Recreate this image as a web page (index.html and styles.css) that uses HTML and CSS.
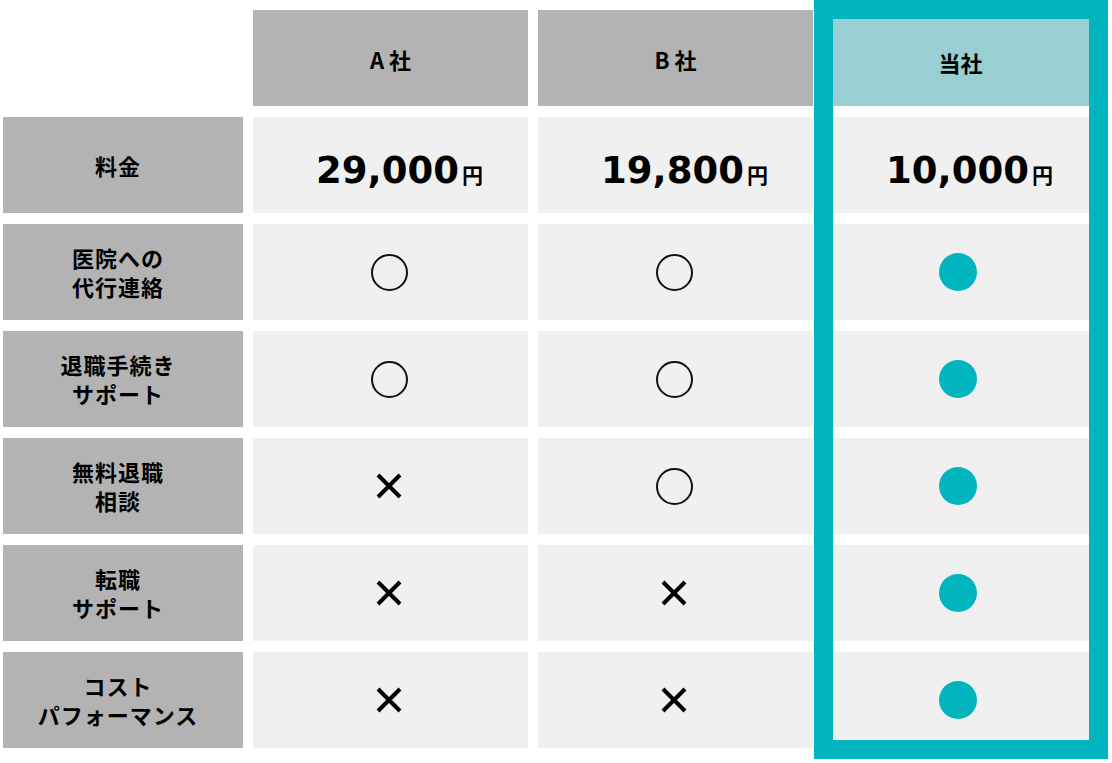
FILE: index.html
```html
<!DOCTYPE html>
<html lang="ja">
<head>
<meta charset="utf-8">
<title>比較表</title>
<link rel="stylesheet" href="styles.css">
</head>
<body>
<div class="table">
  <div class="blank"></div>
  <div class="cell head">A 社</div>
  <div class="cell head">B 社</div>
  <div class="cell head ours">当社</div>

  <div class="cell label">料金</div>
  <div class="cell val price"><span class="num">29,000</span><span class="yen">円</span></div>
  <div class="cell val price"><span class="num">19,800</span><span class="yen">円</span></div>
  <div class="cell val price"><span class="num">10,000</span><span class="yen">円</span></div>

  <div class="cell label">医院への<br>代行連絡</div>
  <div class="cell val"><span class="ring"></span></div>
  <div class="cell val"><span class="ring"></span></div>
  <div class="cell val"><span class="dot"></span></div>

  <div class="cell label">退職手続き<br>サポート</div>
  <div class="cell val"><span class="ring"></span></div>
  <div class="cell val"><span class="ring"></span></div>
  <div class="cell val"><span class="dot"></span></div>

  <div class="cell label">無料退職<br>相談</div>
  <div class="cell val"><svg class="cross" viewBox="0 0 26 26"><path d="M2 2L24 24M24 2L2 24"/></svg></div>
  <div class="cell val"><span class="ring"></span></div>
  <div class="cell val"><span class="dot"></span></div>

  <div class="cell label">転職<br>サポート</div>
  <div class="cell val"><svg class="cross" viewBox="0 0 26 26"><path d="M2 2L24 24M24 2L2 24"/></svg></div>
  <div class="cell val"><svg class="cross" viewBox="0 0 26 26"><path d="M2 2L24 24M24 2L2 24"/></svg></div>
  <div class="cell val"><span class="dot"></span></div>

  <div class="cell label">コスト<br>パフォーマンス</div>
  <div class="cell val"><svg class="cross" viewBox="0 0 26 26"><path d="M2 2L24 24M24 2L2 24"/></svg></div>
  <div class="cell val"><svg class="cross" viewBox="0 0 26 26"><path d="M2 2L24 24M24 2L2 24"/></svg></div>
  <div class="cell val"><span class="dot"></span></div>

  <div class="frame"></div>
</div>
</body>
</html>
```
FILE: styles.css
```css
html, body {
  margin: 0;
  padding: 0;
  background: #ffffff;
}
body {
  font-family: "Noto Sans CJK JP", "Noto Sans", sans-serif;
  color: #000000;
}
.table {
  position: relative;
  display: grid;
  grid-template-columns: 240px 275px 275px 275px;
  grid-template-rows: repeat(7, 96px);
  column-gap: 10px;
  row-gap: 11px;
  padding: 10px 0 15px 3px;
}
.cell {
  display: flex;
  align-items: center;
  justify-content: center;
  text-align: center;
}
.head {
  background: #b3b3b3;
  font-weight: 700;
  font-size: 22px;
  padding-top: 2px;
}
.head.ours {
  background: #99cfd2;
  padding-top: 8px;
}
.label {
  background: #b3b3b3;
  font-weight: 700;
  font-size: 22px;
  line-height: 29px;
  letter-spacing: 1px;
  padding-right: 10px;
}
.val {
  background: #f0f0f0;
}
.price {
  padding-left: 18px;
  padding-top: 10px;
  align-items: baseline;
  align-content: center;
  flex-wrap: wrap;
}
.num {
  font-family: "DejaVu Sans", sans-serif;
  font-weight: 700;
  font-size: 37px;
  line-height: 1;
}
.yen {
  font-family: "Noto Sans CJK JP", sans-serif;
  font-weight: 700;
  font-size: 21px;
  line-height: 1;
  margin-left: 3px;
}
.ring {
  width: 33px;
  height: 33px;
  border: 2px solid #111;
  border-radius: 50%;
  margin-left: -3px;
}
.dot {
  width: 38px;
  height: 38px;
  border-radius: 50%;
  background: #00b5be;
  margin-left: -6px;
}
.cross {
  width: 26px;
  height: 26px;
  margin-left: -3px;
}
.cross path {
  stroke: #000;
  stroke-width: 4;
  fill: none;
}
.frame {
  position: absolute;
  top: 0;
  left: 814px;
  width: 294px;
  height: 759px;
  box-sizing: border-box;
  border: 19px solid #00b5be;
  z-index: 2;
  pointer-events: none;
}
```
